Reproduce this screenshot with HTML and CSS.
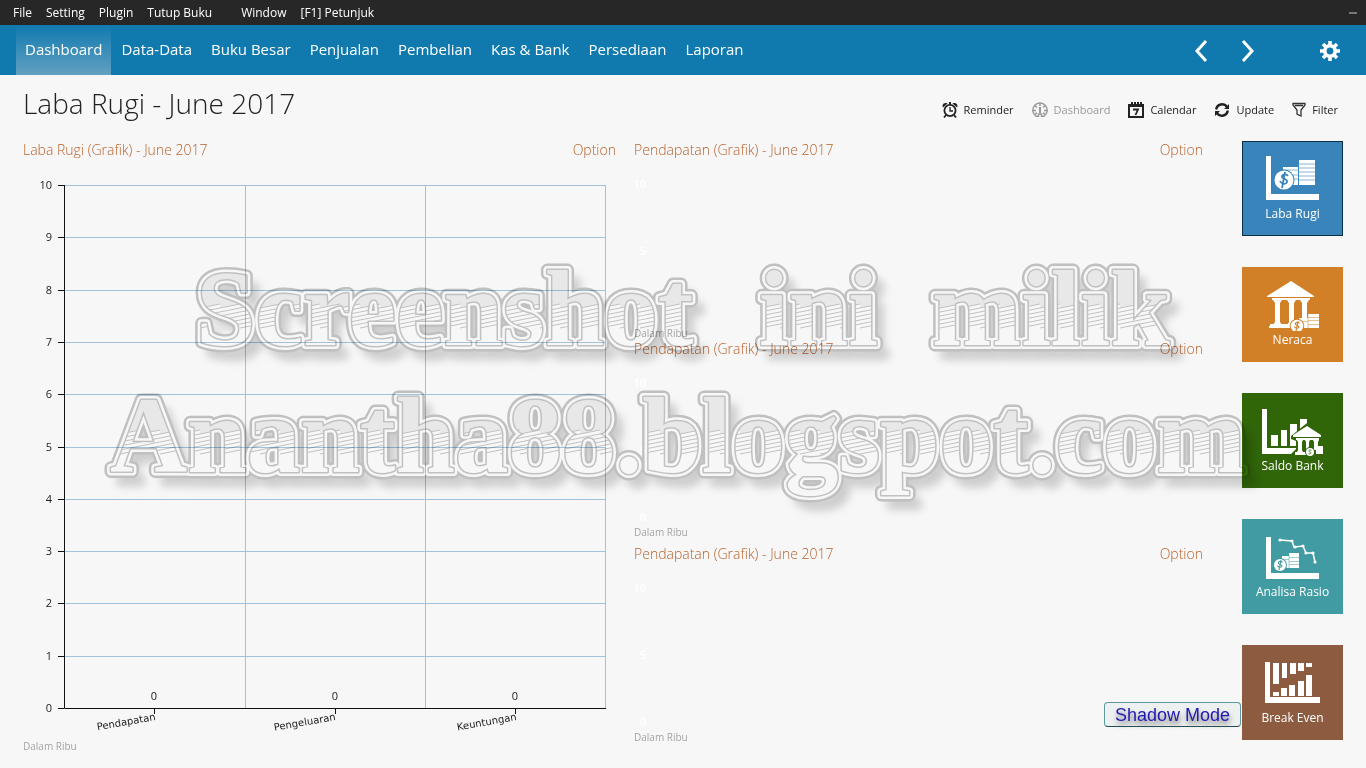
FILE: index.html
```html
<!DOCTYPE html>
<html lang="id">
<head>
<meta charset="utf-8">
<meta name="viewport" content="width=device-width, initial-scale=1">
<title>Laba Rugi - June 2017</title>
<link rel="stylesheet" href="styles.css">
</head>
<body>
<div class="app">
  <header>
    <div class="menubar">
      <button type="button">File</button>
      <button type="button">Setting</button>
      <button type="button">Plugin</button>
      <button type="button" class="menu-last">Tutup Buku</button>
      <button type="button">Window</button>
      <button type="button">[F1] Petunjuk</button>
      <button type="button" class="minimize" aria-label="Minimize"><svg width="8" height="2"><rect width="8" height="2" fill="#777"/></svg></button>
    </div>
    <nav class="nav">
      <a href="#" class="active">Dashboard</a>
      <a href="#">Data-Data</a>
      <a href="#">Buku Besar</a>
      <a href="#">Penjualan</a>
      <a href="#">Pembelian</a>
      <a href="#">Kas &amp; Bank</a>
      <a href="#">Persediaan</a>
      <a href="#">Laporan</a>
      <div class="nav-tools">
        <button type="button" aria-label="Previous"><svg width="14" height="24" viewBox="0 0 14 24"><path d="M12 2 3 12l9 10" fill="none" stroke="#fff" stroke-width="3"/></svg></button>
        <button type="button" aria-label="Next"><svg width="14" height="24" viewBox="0 0 14 24"><path d="m2 2 9 10-9 10" fill="none" stroke="#fff" stroke-width="3"/></svg></button>
        <button type="button" class="gear" aria-label="Settings"><svg width="20" height="20" viewBox="-10 -10 20 20">
          <g stroke="#fff" stroke-width="3.600"><path d="M0-10V-5M0 5V10M-10 0H-5M5 0H10M-7-7-4-4M4 4 7 7M7-7 4-4M-4 4-7 7"/></g>
          <circle r="5.200" fill="none" stroke="#fff" stroke-width="3.600"/></svg></button>
      </div>
    </nav>
  </header>

  <div class="titlebar">
    <h1>Laba Rugi - June 2017</h1>
    <div class="toolbar">
      <button type="button"><svg width="16" height="16" viewBox="0 0 16 16"><g fill="none" stroke="#222"><circle cx="8" cy="8.500" r="5.600" stroke-width="1.800"/><path d="M8 5v4h3" stroke-width="1.300"/><path d="m4 13-2 2.500M12 13l2 2.500" stroke-width="1.800"/></g><path d="M1 5.500C-.5 3 2 0 5.500 1.500L1 5.500ZM15 5.500C16.500 3 14 0 10.500 1.500L15 5.500Z" fill="#222"/><path d="M7 0h2v3H7z" fill="#222"/></svg>Reminder</button>
      <button type="button" class="off"><svg width="16" height="16" viewBox="0 0 16 16" fill="none" stroke="#999" stroke-width="1.400"><path d="M4 14.200a7.200 7.200 0 1 1 8 0H9.500V12h-3v2.200H4ZM8 1v3M1 8.500h3M15 8.500h-3M3 3.500l2 2M13 3.500l-2 2M3 12l2-1M13 12l-2-1"/><path d="M8 5v6" stroke-width="2"/></svg>Dashboard</button>
      <button type="button"><svg width="16" height="16" viewBox="0 0 16 16"><path d="M1 3h14v12H1z" fill="none" stroke="#222" stroke-width="2"/><path d="M0 2h16v3H0zM3 0h2v3H3zM6 0h2v3H6zM9 0h2v3H9zM12 0h2v3h-2z" fill="#222"/><path d="M5 7.500h5L7.500 13" fill="none" stroke="#222" stroke-width="1.800"/></svg>Calendar</button>
      <button type="button"><svg width="16" height="16" viewBox="0 0 16 16"><path d="M2.200 7.500A6 6 0 0 1 13 4.800M13.800 8.500A6 6 0 0 1 3 11.200" fill="none" stroke="#222" stroke-width="2.400"/><path d="M15 2v5h-5zM1 14V9h5z" fill="#222"/></svg>Update</button>
      <button type="button"><svg width="14" height="16" viewBox="0 0 14 16"><path d="M1 1.500h12v1.500L9 8v6l-4-2V8L1 3ZM3 3.500h8" fill="none" stroke="#333" stroke-width="1.300"/></svg>Filter</button>
    </div>
  </div>

  <main class="content">
    <section class="panel main-panel">
      <div class="panel-head"><h2>Laba Rugi (Grafik) - June 2017</h2><button type="button">Option</button></div>
      <svg class="chart" viewBox="0 0 593 576" role="img" aria-label="Laba Rugi">
        <path class="grid" d="M41 23.500H583M41 75.500H583M41 128.500H583M41 180.500H583M41 232.500H583M41 285.500H583M41 337.500H583M41 389.500H583M41 441.500H583M41 494.500H583M222.500 23V546M402.500 23V546M582.500 23V546"/>
        <path class="axis" d="M41.500 23V546.500H583M35 23.500h6M35 75.500h6M35 128.500h6M35 180.500h6M35 232.500h6M35 285.500h6M35 337.500h6M35 389.500h6M35 441.500h6M35 494.500h6M35 546.500h6M131.500 546v6M312.500 546v6M492.500 546v6"/>
        <g class="ticks">
          <text x="29" y="27">10</text><text x="29" y="79">9</text><text x="29" y="132">8</text><text x="29" y="184">7</text><text x="29" y="236">6</text><text x="29" y="289">5</text><text x="29" y="341">4</text><text x="29" y="393">3</text><text x="29" y="445">2</text><text x="29" y="498">1</text><text x="29" y="550">0</text>
        </g>
        <g class="values"><text x="131" y="538">0</text><text x="312" y="538">0</text><text x="492" y="538">0</text></g>
        <g class="cats">
          <text transform="translate(133 558) rotate(-10)">Pendapatan</text>
          <text transform="translate(313 558) rotate(-10)">Pengeluaran</text>
          <text transform="translate(494 558) rotate(-10)">Keuntungan</text>
        </g>
      </svg>
      <p class="unit">Dalam Ribu</p>
    </section>

    <div class="side-panels">
      <section class="panel">
        <div class="panel-head"><h2>Pendapatan (Grafik) - June 2017</h2><button type="button">Option</button></div>
        <div class="scale"><span>10</span><span>5</span><span>0</span></div>
        <p class="unit">Dalam Ribu</p>
      </section>
      <section class="panel">
        <div class="panel-head"><h2>Pendapatan (Grafik) - June 2017</h2><button type="button">Option</button></div>
        <div class="scale"><span>10</span><span>5</span><span>0</span></div>
        <p class="unit">Dalam Ribu</p>
      </section>
      <section class="panel last">
        <div class="panel-head"><h2>Pendapatan (Grafik) - June 2017</h2><button type="button">Option</button></div>
        <div class="scale"><span>10</span><span>5</span><span>0</span></div>
        <p class="unit">Dalam Ribu</p>
      </section>
    </div>

    <aside class="tiles">
      <button type="button" class="tile blue selected">
        <svg viewBox="0 0 101 64" fill="#fff"><path d="M24 15h5v38h48v6H24z"/><path d="M41 26h15v18H41zM57 19h16v25H57z"/><path d="M41 29h15M50 34h6M50 38h6M57 23h16M57 27h16M57 31h16M57 35h16M57 39h16" stroke="#3984bb" stroke-width=".6"/><circle cx="42" cy="39" r="10.500" fill="#3984bb"/><circle cx="42" cy="39" r="9.500"/><path d="M46 35c-2-3-7-1-6 1s6 2 5 5-6 2-7-1M43 31l-3 16" fill="none" stroke="#3984bb" stroke-width="1.800"/></svg>
        <span>Laba Rugi</span></button>
      <button type="button" class="tile orange">
        <svg viewBox="0 0 101 64" fill="#fff"><path d="M49 14 72 29v1H25v-1zM30 31h38v2H30zM31 33h9l-2 3v19l2 3h-9l2-3V36zM45 33h9l-2 3v19l2 3h-9l2-3V36zM58 33h9l-2 3v19l2 3h-9l2-3V36zM28 57h38v2H28zM27 59h39v2H27z"/><path d="M57 51h9v10h-9zM66 47h11v14H66z"/><path d="M57 54.500h9M66 50.500h11M66 53.500h11M66 57.500h11M66 47v14" stroke="#d28028" stroke-width=".5"/><circle cx="55" cy="59" r="7.300" fill="#d28028"/><circle cx="55" cy="59" r="6.300"/><path d="M57.500 56.500c-1-2-5-1-4 .7s4 1.500 3.500 3-4 1.500-4.500-.5M56 54l-2 10" fill="none" stroke="#d28028" stroke-width="1.100"/></svg>
        <span>Neraca</span></button>
      <button type="button" class="tile green">
        <svg viewBox="0 0 101 64" fill="#fff"><path d="M20 16h5v39h30v6H20zM29 42h7v11h-7zM39 37h6v16h-6zM48 31h7v22h-7zM58 26h7v15h-7z"/><path d="M65 30 49 43v3l5 2v8l-5 5v3h29V46h3v-4z" fill="#306508"/><path d="M65 33 79 42v2H51v-2zM54 45h23v2H54zM55 47h6l-1 2v8l1 2h-6l1-2v-8zM63 47h5l-1 2v8h-3v-8zM71 47h6l-1 2v8h-4v-8zM53 59h14v3H53z"/><path d="M74 53h7v8h-7z"/><circle cx="68" cy="59" r="5" fill="#306508"/><circle cx="68" cy="59" r="4"/><path d="M69.500 57.500c-1-1-3-.5-2.500.7s2.500 1 2 2-2 1-2.500 0" fill="none" stroke="#306508" stroke-width=".8"/></svg>
        <span>Saldo Bank</span></button>
      <button type="button" class="tile teal">
        <svg viewBox="0 0 101 64" fill="#fff"><path d="M24 18h5v36h48v6H24z"/><path d="M38 21 50 22 52 28 61 27 64 34 71 34 73 43" fill="none" stroke="#fff" stroke-width="1.500"/><circle cx="38" cy="21" r="1.600"/><circle cx="50" cy="22" r="1.600"/><circle cx="53" cy="28" r="1.600"/><circle cx="61" cy="27" r="1.600"/><circle cx="64" cy="34" r="1.600"/><circle cx="71" cy="34" r="1.600"/><circle cx="73" cy="43" r="1.600"/><path d="M40 37h7v12h-7zM47 34h10v15H47z"/><path d="M40 40.500h7M47 38.500h10M47 42.500h10M47 45.500h10M47 35v14" stroke="#419ba2" stroke-width=".5"/><circle cx="38" cy="46" r="7" fill="#419ba2"/><circle cx="38" cy="46" r="6"/><path d="M40.500 43.500c-1-2-5-1-4 .7s4 1.500 3.500 3-4 1.500-4.500-.5M39 41l-2 10" fill="none" stroke="#419ba2" stroke-width="1.100"/></svg>
        <span>Analisa Rasio</span></button>
      <button type="button" class="tile brown">
        <svg viewBox="0 0 101 64" fill="#fff"><path d="M23 17h5v35h50v6H23zM31 18h6v21h-6zM40 18h5v15h-5zM48 18h6v11h-6zM56 18h6v8h-6zM64 18h6v4h-6zM31 47h6v4h-6zM39 43h6v8h-6zM47 40h6v11h-6zM56 36h6v15h-6zM64 30h6v21h-6z"/></svg>
        <span>Break Even</span></button>
    </aside>
  </main>

  <button type="button" class="shadow-mode">Shadow Mode</button>

  <svg class="watermark" viewBox="0 0 1366 768" aria-label="Screenshot ini milik Anantha88.blogspot.com">
    <defs>
      <pattern id="hatch" width="20" height="768" patternUnits="userSpaceOnUse">
        <rect width="20" height="768" fill="#fff"/>
        <path d="M0 0H20V304L0 308ZM0 380H20V430L0 434Z" fill="#f0f0f0"/>
        <path d="M0 308l20-4M0 312l20-4M0 316l20-4M0 320l20-4M0 324l20-4M0 328l20-4M0 434l20-4M0 438l20-4M0 442l20-4M0 446l20-4M0 450l20-4M0 454l20-4" stroke="#c8c8c8"/>
      </pattern>
      <filter id="drop" x="-5%" y="-10%" width="110%" height="125%"><feGaussianBlur stdDeviation="4"/></filter>
      <g id="words">
        <text x="196" y="345">Screenshot</text>
        <text x="759" y="345">ini</text>
        <text x="932" y="345">milik</text>
        <text x="110" y="472">Anantha88.blogspot.com</text>
      </g>
    </defs>
    <g transform="translate(9 11)" filter="url(#drop)"><use href="#words" fill="#d4d4d4" stroke="#d4d4d4" stroke-width="8"/></g>
    <use href="#words" fill="#c6c6c6" stroke="#c6c6c6" stroke-width="13"/>
    <use href="#words" fill="#fff" stroke="#fff" stroke-width="8"/>
    <use href="#words" fill="#c8c8c8" stroke="#c8c8c8" stroke-width="3"/>
    <use href="#words" fill="url(#hatch)"/>
  </svg>
</div>
</body>
</html>
```
FILE: styles.css
```css
* { box-sizing: border-box; }
body {
  margin: 0;
  background: #f7f7f7;
  color: #222;
  font-family: "Open Sans", "Noto Sans", sans-serif;
  font-size: 12px;
}
button {
  border: 0;
  padding: 0;
  background: none;
  color: inherit;
  font: inherit;
  white-space: nowrap;
}
h1, h2, p { margin: 0; font-weight: 400; }
svg { display: block; }
.app {
  position: relative;
  min-height: 100vh;
  overflow: hidden;
}
.menubar {
  display: flex;
  align-items: center;
  gap: 14px;
  height: 25px;
  padding: 0 9px 0 13px;
  background: #272727;
  color: #fff;
  font-size: 12px;
}
.menu-last { margin-right: 15px; }
.minimize { margin-left: auto; }
.nav {
  display: flex;
  gap: 1px;
  height: 50px;
  padding: 0 26px 0 16px;
  background: #107aaf;
}
.nav a {
  display: flex;
  align-items: center;
  padding: 0 9px 2px;
  color: #fff;
  font-size: 15px;
  white-space: nowrap;
  text-decoration: none;
}
.nav a.active { background: linear-gradient(#107aaf, #62a0c2); }
.nav-tools {
  display: flex;
  align-items: center;
  gap: 33px;
  margin-left: auto;
  padding-top: 2px;
}
.gear { margin-left: 32px; }
.titlebar {
  display: flex;
  justify-content: space-between;
  padding: 10px 28px 0 23px;
}
h1 {
  font-size: 28px;
  font-weight: 300;
  line-height: 36px;
}
.toolbar {
  display: flex;
  align-items: center;
  gap: 18px;
  padding-top: 13px;
  font-size: 11px;
}
.toolbar button {
  display: flex;
  align-items: center;
  gap: 6px;
}
.toolbar .off { color: #999; }
.content {
  display: grid;
  grid-template-columns: 611fr 608fr 101px;
  padding: 20px 23px 0;
}
.main-panel { margin-right: 18px; }
.side-panels { margin-right: 39px; }
.panel-head {
  display: flex;
  justify-content: space-between;
  line-height: 18px;
  color: #b8622c;
  font-size: 14px;
  font-weight: 300;
}
.panel-head h2 {
  font-size: 14px;
  font-weight: 300;
}
.chart {
  width: 100%;
  height: auto;
  margin-top: 3px;
}
.grid { fill: none; stroke: #a0c2da; }
.axis { fill: none; stroke: #111; }
.ticks text {
  text-anchor: end;
  font-size: 11px;
  fill: #222;
}
.values text {
  text-anchor: middle;
  font-size: 11px;
  fill: #222;
}
.cats text {
  text-anchor: end;
  font-family: "DejaVu Sans", sans-serif;
  font-size: 10px;
  fill: #222;
}
.unit {
  color: #a4a4a4;
  font-size: 10px;
  line-height: 16px;
}
.side-panels .unit { line-height: 14px; }
.scale {
  display: flex;
  flex-direction: column;
  align-items: flex-end;
  justify-content: space-between;
  width: 12px;
  height: 150px;
  margin-top: 17px;
  color: #fff;
  font-size: 11px;
  font-weight: 600;
  line-height: 16px;
}
.side-panels .panel { height: 199px; }
.side-panels .last { margin-top: 6px; }
.tiles {
  display: flex;
  flex-direction: column;
  gap: 31px;
}
.tile {
  display: flex;
  flex-direction: column;
  width: 101px;
  height: 95px;
  color: #fff;
  font-size: 12px;
  line-height: 18px;
}
.tile svg { width: 101px; height: 64px; }
.tile span { width: 100%; text-align: center; }
.selected { outline: 1px solid #0c2f48; outline-offset: -1px; }
.blue { background: #3984bb; }
.orange { background: #d28028; }
.green { background: #306508; }
.teal { background: #419ba2; }
.brown { background: #8c5b40; }
.shadow-mode {
  position: absolute;
  right: 125px;
  top: 702px;
  width: 137px;
  height: 25px;
  border: 1px solid #5b9a9c;
  border-bottom-color: #1e4c50;
  border-radius: 4px;
  background: #eef1f1;
  color: #2018b4;
  font-family: "Liberation Sans", sans-serif;
  font-size: 18px;
  line-height: 24px;
  text-shadow: 1px 4px 5px #777;
}
.watermark {
  position: absolute;
  left: 0;
  top: 0;
  width: 100%;
  mix-blend-mode: multiply;
  pointer-events: none;
  font-family: "Liberation Serif", serif;
  font-size: 107px;
  font-weight: 700;
  stroke-linejoin: round;
}
```
